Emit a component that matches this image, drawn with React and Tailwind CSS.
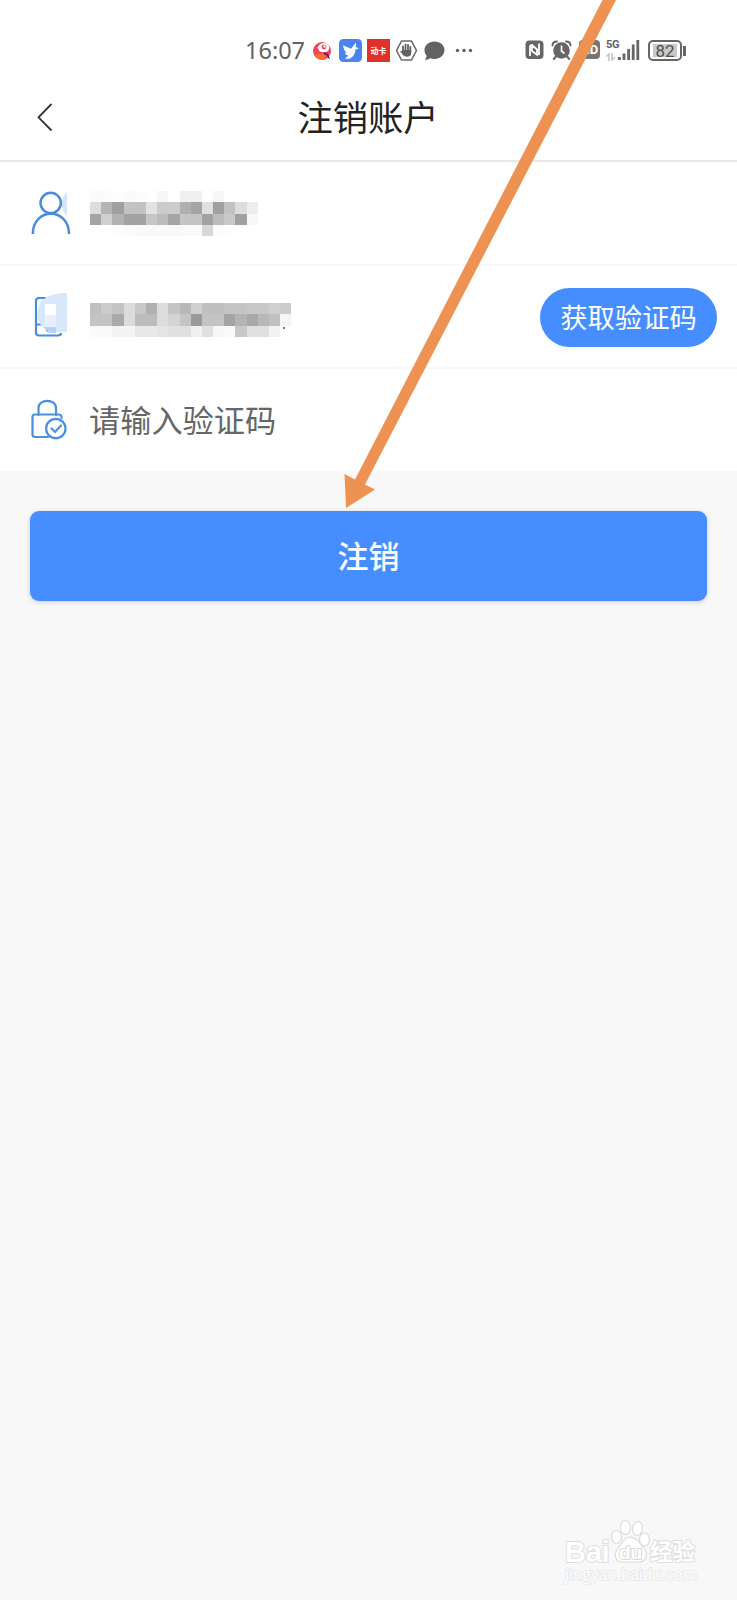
import React from 'react';

// grey level of each mosaic block, one row per line
const nameMosaic = [
  'fa fb fd fa fc fe f7 fe f0 f0 fe f6 ff ff ff',
  'dd b4 9f c3 c3 e2 cc cc b0 a4 e0 a0 c2 dd ee',
  'a4 d0 b2 a2 a2 c6 bc a5 c5 c5 a2 bc c8 a0 f8',
  'ff ff fd fb f9 f9 f9 f9 fa fa d8 fb fd ff ff',
];

const phoneMosaic = [
  'c0 cc c4 dc c8 b0 dc c4 b8 d0 c0 c0 c4 c4 c8 c8 d0 cc',
  'c4 c4 aa dc bc bc dc d4 c4 9a c4 c4 a4 b4 a8 b8 c0 f5',
  'fa fa f4 f4 e8 e8 e4 e0 e0 f0 e0 f6 fa c8 e0 e0 f2 ff',
];

const Mosaic = ({ rows }) => (
  <div className="flex flex-col">
    {rows.map((row, i) => (
      <div key={i} className="flex">
        {row.split(' ').map((c, j) => (
          <span key={j} className="w-[11.2px] h-[11.3px]" style={{ backgroundColor: `#${c}${c}${c}` }} />
        ))}
      </div>
    ))}
  </div>
);

const StatusBar = () => (
  <div className="h-[82px] pt-[38px] pl-[245px] flex items-start text-[#626262]">
    <span className="w-[62px] h-6 text-[23.5px] leading-6 whitespace-nowrap font-['Noto_Sans',sans-serif]">16:07</span>
    <div className="flex items-center gap-[5px] mt-px ml-[5px]">
      <svg className="w-[22px] h-[22px]" viewBox="0 0 22 22">
        <circle cx="10" cy="11" r="9" fill="#f0455c" />
        <path d="M2 15a9 9 0 0 0 13 3l-5-5z" fill="#fa6a38" />
        <path d="M6 7c2-5 9-5 11-1 1 4-2 7-6 6-3 0-5-1-4-3l-2-1z" fill="#fff" />
        <circle cx="12" cy="7" r="2.4" fill="#e94559" />
        <circle cx="12.500" cy="6.500" r="1.200" fill="#fff" />
        <path d="M12 12l4 2 2 5-2-1-1-3-3-1z" fill="#5b1745" />
      </svg>
      <svg className="w-[23px] h-[23px]" viewBox="0 0 23 23">
        <rect width="23" height="23" rx="4.500" fill="#4b83f2" />
        <path d="M4 6.200l8 3.500L17 3.500l-.2 4.700 3.200 1-3.500 1.300c-.3 4.500-2.400 7.500-6 9.300H6l3.300-3.300c-2-.7-3-1.400-3.300-2.800l2 .1C5.600 12.300 4.400 9.500 4 6.200z" fill="#fff" />
      </svg>
      <span className="w-[23px] h-[23px] bg-[#df302c] text-white text-[8px] font-bold leading-[23px] text-center whitespace-nowrap font-['Noto_Sans_CJK_SC',sans-serif]">动卡</span>
      <svg className="w-[23px] h-[23px]" viewBox="0 0 23 23">
        <path d="M6.500 2h10l5 9.500-5 9.500h-10l-5-9.500z" fill="none" stroke="#6b6b6b" strokeWidth="1.600" strokeLinejoin="round" />
        <path d="M8 13V7.500M10.500 12V5.500M13 12V5.800M15.300 13V8" stroke="#626262" strokeWidth="1.800" strokeLinecap="round" />
        <path d="M7.200 11h9v3.500c0 4-6.500 4-8.200 1.500l-2.700-3.500c0-1 1.200-1.200 1.900 0z" fill="#626262" />
      </svg>
      <svg className="w-[22px] h-[22px]" viewBox="0 0 22 22">
        <path d="M11.500 1.500c5.800 0 10 3.700 10 8.500s-4.200 9-10 9c-1.500 0-3-.3-4-.8L2 20.500l1.700-4.600C2.200 14.200 1.500 12.300 1.500 10c0-4.800 4.200-8.500 10-8.500z" fill="#626262" />
      </svg>
      <svg className="w-[18px] h-[22px] ml-[5px]" viewBox="0 0 18 22" fill="#626262">
        <circle cx="2.500" cy="10.500" r="1.700" /><circle cx="9" cy="10.500" r="1.700" /><circle cx="15.500" cy="10.500" r="1.700" />
      </svg>
    </div>
    <div className="flex items-start ml-[52px] mt-[2px]">
      <svg className="w-[19px] h-[20px]" viewBox="0 0 19 20">
        <rect x=".5" y=".5" width="18" height="18.500" rx="4" fill="#666" />
        <path d="M5 16V5.500M5 5l2 .5V11l6 4.500M6.500 4.500l5.500 5v5M14 15V3.500" fill="none" stroke="#fff" strokeWidth="1.800" />
      </svg>
      <svg className="w-[21px] h-[21px] ml-[7px]" viewBox="0 0 21 21">
        <circle cx="10.500" cy="10.500" r="8.300" fill="#666" />
        <path d="M1.500 5.500c0-2.500 2-4 4.500-4M19.500 5.500c0-2.500-2-4-4.500-4M5 16.500L2.800 19M16 16.500l2.200 2.500" fill="none" stroke="#666" strokeWidth="2" strokeLinecap="round" />
        <path d="M10.500 5.500V11l3 2.500" fill="none" stroke="#fff" strokeWidth="1.700" />
      </svg>
      <span className="w-[21px] h-[19px] ml-[7px] rounded-[4px] bg-[#757575] text-white text-[13px] leading-[19px] font-bold text-center font-['Roboto',sans-serif]">HD</span>
      <div className="flex items-start ml-[6px] h-[21px]">
        <div className="w-[12px] flex flex-col">
          <span className="text-[11px] leading-[10px] font-bold tracking-tight font-['Roboto',sans-serif]">5G</span>
          <svg className="w-[10px] h-[8px] mt-[3px]" viewBox="0 0 10 8">
            <path d="M3 8V1L.5 3.500M6 0v7l3-3" fill="none" stroke="#c4c4c4" strokeWidth="1.500" />
          </svg>
        </div>
        <svg className="w-[22px] h-[21px]" viewBox="0 0 22 21" fill="#666">
          <rect x="0" y="17" width="2.800" height="3" />
          <rect x="4.600" y="13.500" width="2.800" height="6.500" />
          <rect x="9.200" y="9" width="2.800" height="11" />
          <rect x="13.800" y="4.500" width="2.800" height="15.500" />
          <rect x="18.400" y="0" width="2.800" height="20" />
        </svg>
      </div>
      <div className="flex items-center ml-[8px]">
        <div className="w-[34px] h-[21px] p-[2px] rounded-[5px] border-2 border-[#666]">
          <div className="w-[24px] h-[13px] mx-auto bg-[#c9c9c9] text-[#505050] text-[17px] leading-[14px] text-center font-normal font-['Roboto',sans-serif]">82</div>
        </div>
        <span className="w-[3px] h-[10px] ml-px bg-[#666]"></span>
      </div>
    </div>
  </div>
);

const App = () => {
  return (
    <div className="relative w-[737px] h-[1600px] overflow-hidden flex flex-col bg-[#f8f8f8] font-['Noto_Sans_CJK_SC',sans-serif]">
      <div className="bg-white">
        <StatusBar />
        {/* Header */}
        <div className="h-20 flex items-center border-b-2 border-[#e8e8e8]">
          <svg className="w-[17px] h-[30px] ml-[36px] mt-[-9px]" viewBox="0 0 17 30">
            <path d="M15.500 2L2.500 15.300 15.500 28.500" fill="none" stroke="#333" strokeWidth="1.800" />
          </svg>
          <h1 className="w-[630px] text-center text-[35.300px] leading-[50px] text-[#222] mt-[-10px]">注销账户</h1>
        </div>

        {/* Form */}
        <div className="h-[104px] pl-[30px] flex items-start border-b-2 border-[#f8f8f8]">
          <svg className="w-[42px] h-[46px] mt-[28px]" viewBox="0 0 42 46">
            <path d="M37 2v24c-7-6-7-18 0-24z" fill="#d5e5fa" />
            <g fill="none" stroke="#4b8bdc" strokeWidth="2.500">
              <circle cx="20.700" cy="13" r="10.200" />
              <path d="M2.800 44C2.800 17 39 17 39 44" />
            </g>
          </svg>
          <div className="ml-[18px] mt-[29px]"><Mosaic rows={nameMosaic} /></div>
        </div>
        <div className="h-[103px] pl-[30px] pr-5 flex items-start border-b-2 border-[#f8f8f8]">
          <svg className="w-[42px] h-[48px] mt-[25px]" viewBox="0 0 42 48">
            <path d="M16 7H9Q6 7 6 10v31.500q0 3 3 3h19q3 0 3-2.500M6 33.500h8l4 7" fill="none" stroke="#4b8bdc" strokeWidth="2.200" />
            <path d="M37 2v39H22C8 36 4 26 10 12 14 6 23 2 37 2z" fill="#d9e7fa" />
            <path d="M15 13h11v11H15z" fill="#fff" />
            <path d="M15 24h11v12H15z" fill="#e7effb" />
            <path d="M14 36h12v6h-7z" fill="#b8d2f5" />
          </svg>
          <div className="ml-[18px] mt-[37px]"><Mosaic rows={phoneMosaic} /></div>
          <span className="w-[2px] h-[2px] mt-[61px] -ml-[8px] bg-[#777]"></span>
          <button className="w-[177px] h-[59px] mt-[22px] ml-auto rounded-full bg-[#468eff] text-white text-[27.300px] leading-[57px] pb-[2px] whitespace-nowrap">获取验证码</button>
        </div>
        <div className="h-[102px] pl-[30px] flex items-start">
          <svg className="w-[42px] h-[44px] mt-[29px]" viewBox="0 0 42 44">
            <g fill="none" stroke="#4b8fdf" strokeWidth="2.200" strokeLinecap="round">
              <path d="M8.500 17v-7c0-9.500 17.500-9.500 17.500 0v7" />
              <path d="M31.500 20v-1q0-2.500-3-2.500H5q-2.500 0-2.500 2.500v17.500q0 2.500 2.500 2.500h13" />
              <circle cx="25.800" cy="30.500" r="9.700" />
              <path d="M21.500 30.500l3.500 3.500 6-6.500" />
            </g>
          </svg>
          <span className="ml-[17px] mt-[27px] text-[31.200px] leading-[46px] text-[#666]">请输入验证码</span>
        </div>
      </div>

      <button className="w-[677px] h-[90px] ml-[30px] mt-10 rounded-[9px] bg-[#468eff] text-white text-[31px] leading-[87px] pb-[3px] font-medium shadow-[0_1px_5px_rgba(0,0,0,0.18)]">注销</button>

      {/* Watermark */}
      <div className="mt-auto ml-[565px] mb-[14px] w-[140px] flex flex-col text-white">
        <div className="flex items-end h-[44px]">
          <span className="w-[45px] text-[29px] leading-[22px] tracking-[-0.300px] font-bold font-['Liberation_Sans',sans-serif] [-webkit-text-stroke:2px_#dedede] [paint-order:stroke_fill]">Bai</span>
          <svg className="w-[40px] h-[44px]" viewBox="0 0 40 44" fill="#fff" stroke="#dcdcdc" strokeWidth="1.200">
            <ellipse cx="6.500" cy="18" rx="5" ry="6.500" />
            <ellipse cx="15.500" cy="8.500" rx="5" ry="7" />
            <ellipse cx="27.500" cy="9.500" rx="5" ry="7" transform="rotate(8 27.500 9.500)" />
            <ellipse cx="34.500" cy="20.500" rx="5" ry="6.500" />
            <path d="M20 18c-6 0-8 7-12 11-4 5-4 14 4 14h17c8 0 9-9 5-14-4-4-7-11-14-11z" />
            <text x="20.500" y="40" textAnchor="middle" fontFamily="Liberation Sans, sans-serif" fontWeight="bold" fontSize="19" fill="#fff" stroke="#d8d8d8" strokeWidth="2" paintOrder="stroke">du</text>
          </svg>
          <span className="text-[22.500px] leading-[26px] font-bold whitespace-nowrap [-webkit-text-stroke:2px_#dedede] [paint-order:stroke_fill]">经验</span>
        </div>
        <span className="text-[15.500px] leading-[23px] whitespace-nowrap font-['Open_Sans',sans-serif] [-webkit-text-stroke:1.500px_#e6e6e6] [paint-order:stroke_fill]">jingyan.baidu.com</span>
      </div>

      {/* Arrow pointing to the submit button */}
      <svg className="absolute left-0 top-0 w-[737px] h-[520px] pointer-events-none" viewBox="0 0 737 520">
        <path d="M346 508L344.500 474 355 479.500 602.500 0H616L365 484.500 375 489.500z" fill="#ed9252" />
      </svg>
    </div>
  );
};

export default App;
